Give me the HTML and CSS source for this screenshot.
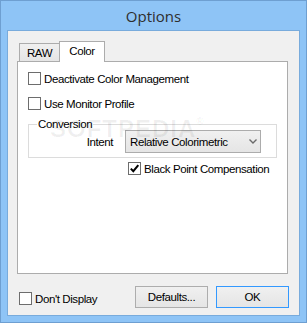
FILE: index.html
```html
<!DOCTYPE html>
<html>
<head>
<meta charset="utf-8">
<link rel="stylesheet" href="styles.css">
</head>
<body>
<div class="window">
  <div class="titlebar">Options</div>
  <div class="client">
    <div class="tabs">
      <div class="tab">RAW</div>
      <div class="tab active">Color</div>
    </div>
    <div class="panel">
      <label class="check"><span class="box"></span><span>Deactivate Color Management</span></label>
      <label class="check row2"><span class="box"></span><span>Use Monitor Profile</span></label>
      <div class="group">
        <div class="legend">Conversion</div>
        <div class="intent-row">
          <span class="intent-label">Intent</span>
          <div class="combo">
            <span>Relative Colorimetric</span>
            <svg class="chev" width="8" height="5" viewBox="0 0 8 5"><path d="M0.5 0.5 L4 4 L7.5 0.5" fill="none" stroke="#6a6a6a" stroke-width="1.4"/></svg>
          </div>
        </div>
      </div>
      <label class="check bpc"><span class="box"><svg width="11" height="11" viewBox="0 0 11 11"><path d="M1.8 5.6 L4.3 8.2 L9.3 2.2" fill="none" stroke="#000" stroke-width="2"/></svg></span><span>Black Point Compensation</span></label>
      <div class="watermark">SOFTPEDIA<span class="reg">®</span></div>
    </div>
    <div class="footer">
      <label class="check dont"><span class="box"></span><span>Don't Display</span></label>
      <div class="buttons">
        <button class="btn">Defaults...</button>
        <button class="btn default">OK</button>
      </div>
    </div>
  </div>
</div>
</body>
</html>
```
FILE: styles.css
```css
body {
  margin: 0;
  font-family: "Liberation Sans", Arial, sans-serif;
  font-size: 11.5px;
  letter-spacing: -0.4px;
  color: #000;
}
.window {
  width: 307px;
  height: 323px;
  box-sizing: border-box;
  border: 1px solid #6e9fd1;
  background: #8ec4f6;
  display: flex;
  flex-direction: column;
}
.titlebar {
  height: 29px;
  display: flex;
  align-items: center;
  justify-content: center;
  font-family: "Open Sans", sans-serif;
  font-size: 15px;
  letter-spacing: 0;
  color: #2e2e2e;
}
.client {
  margin: 0 6px 6px;
  flex: 1;
  border: 1px solid #78abdc;
  background: #f0f0f0;
  display: flex;
  flex-direction: column;
  padding: 10px 11px 0 9px;
}
.tabs {
  display: flex;
  align-items: flex-end;
  height: 20px;
  padding-left: 2px;
}
.tab {
  box-sizing: border-box;
  width: 41px;
  height: 18px;
  border: 1px solid #acacac;
  border-bottom: none;
  background: linear-gradient(#f0f0f0, #e5e5e5);
  display: flex;
  align-items: center;
  justify-content: center;
}
.tab.active {
  width: 46px;
  height: 21px;
  margin-left: -1px;
  margin-bottom: -1px;
  background: #fff;
  position: relative;
  z-index: 1;
  padding-bottom: 2px;
}
.panel {
  box-sizing: border-box;
  height: 213px;
  border: 1px solid #acacac;
  background: #fff;
  padding: 10px 10px 0 10px;
  position: relative;
  display: flex;
  flex-direction: column;
  align-items: flex-start;
}
.watermark {
  position: absolute;
  left: 32px;
  top: 55px;
  z-index: 2;
  font-size: 24px;
  line-height: 24px;
  font-weight: bold;
  letter-spacing: 1px;
  color: rgba(0, 0, 0, 0.06);
  pointer-events: none;
}
.watermark .reg {
  font-size: 10px;
  line-height: 10px;
  vertical-align: top;
  letter-spacing: 0;
}
.check {
  display: flex;
  align-items: center;
  gap: 3px;
  height: 13px;
  white-space: nowrap;
}
.box {
  box-sizing: border-box;
  width: 13px;
  height: 13px;
  border: 1px solid #6d6d6d;
  background: #fff;
  display: flex;
  align-items: center;
  justify-content: center;
  flex: none;
}
.row2 {
  margin-top: 12px;
}
.group {
  position: relative;
  box-sizing: border-box;
  align-self: stretch;
  margin-top: 14px;
  height: 34px;
  border: 1px solid #dcdcdc;
  padding-top: 5px;
}
.legend {
  position: absolute;
  left: 8px;
  top: -8px;
  padding: 0 1px;
  background: #fff;
  line-height: 15px;
}
.intent-row {
  display: flex;
  align-items: center;
}
.intent-label {
  box-sizing: border-box;
  width: 96px;
  padding-right: 12px;
  text-align: right;
}
.combo {
  box-sizing: border-box;
  width: 136px;
  height: 23px;
  border: 1px solid #acacac;
  background: linear-gradient(#f0f0f0, #e5e5e5);
  display: flex;
  align-items: center;
  justify-content: space-between;
  padding: 0 3px 0 4px;
  white-space: nowrap;
}
.bpc {
  margin-top: 4px;
  margin-left: 100px;
}
.footer {
  margin-top: 12px;
  display: flex;
  align-items: flex-end;
  justify-content: space-between;
  height: 22px;
  margin-right: -1px;
}
.dont {
  margin-left: 2px;
  margin-bottom: 3px;
}
.buttons {
  display: flex;
  gap: 8px;
}
.btn {
  box-sizing: border-box;
  width: 73px;
  height: 22px;
  border: 1px solid #adadad;
  background: linear-gradient(#f0f0f0, #e5e5e5);
  font-family: "Liberation Sans", Arial, sans-serif;
  font-size: 11.5px;
  letter-spacing: -0.4px;
  color: #000;
  padding: 0;
}
.btn.default {
  border-color: #3399ff;
}
```
